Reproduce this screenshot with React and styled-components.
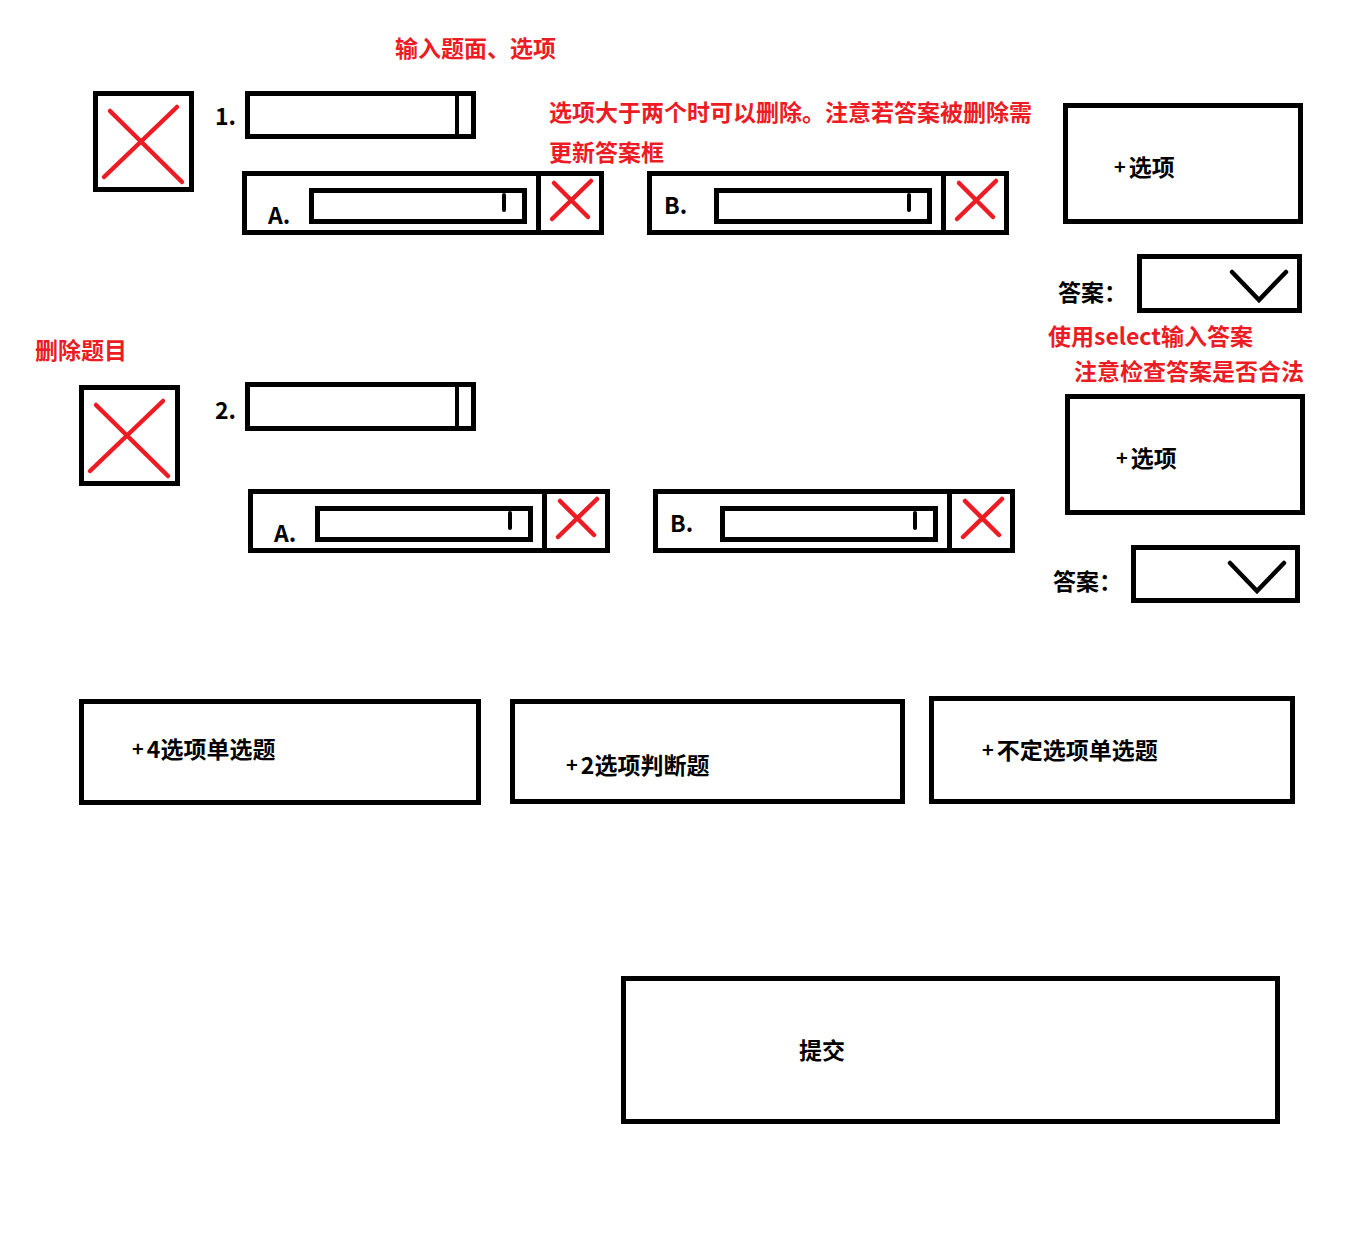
import React from "react";
import styled, { createGlobalStyle } from "styled-components";

const RED = "#ed1c24";

const GlobalStyle = createGlobalStyle`
	html, body {
		margin: 0;
		padding: 0;
		background: #fff;
	}
	body {
		font-family: "Noto Sans CJK SC", "Microsoft YaHei", sans-serif;
		font-weight: 700;
		color: #000;
	}
	* {
		box-sizing: border-box;
	}
`;

const Page = styled.div`
	width: 1371px;
	min-height: 1251px;
	display: flex;
	flex-direction: column;
	align-items: flex-start;
`;

const Note = styled.div`
	color: ${RED};
	font-size: 23px;
	line-height: ${(p) => p.$lh || 36}px;
	margin-top: ${(p) => p.$mt || 0}px;
	margin-left: ${(p) => p.$ml || 0}px;
	width: ${(p) => (p.$w ? `${p.$w}px` : "auto")};
	white-space: ${(p) => (p.$w ? "normal" : "nowrap")};
`;

const Board = styled.div`
	display: flex;
	align-items: flex-start;
	width: 100%;
`;

const QuestionList = styled.div`
	width: 1048px;
	flex-shrink: 0;
	display: flex;
	flex-direction: column;
	align-items: flex-start;
`;

const SidePanel = styled.div`
	flex: 1;
	display: flex;
	flex-direction: column;
	align-items: flex-start;
`;

const QuestionBlock = styled.section`
	display: flex;
	align-items: flex-start;
	margin-top: ${(p) => p.$mt}px;
`;

const DeleteBox = styled.button`
	appearance: none;
	padding: 0;
	background: #fff;
	width: 101px;
	height: 101px;
	border: 5px solid #000;
	margin-top: ${(p) => p.$mt || 0}px;
	margin-left: ${(p) => p.$ml || 0}px;
	display: flex;
	flex-shrink: 0;
	cursor: pointer;
`;

const QuestionBody = styled.div`
	display: flex;
	flex-direction: column;
	align-items: flex-start;
	margin-left: ${(p) => p.$ml}px;
`;

const TitleRow = styled.div`
	display: flex;
	align-items: flex-start;
`;

const Num = styled.span`
	width: 30px;
	font-size: 23px;
	line-height: 48px;
	margin-top: ${(p) => p.$mt || 0}px;
`;

const TitleInput = styled.div`
	width: 231px;
	height: ${(p) => p.$h}px;
	border: 5px solid #000;
	display: flex;
	justify-content: flex-end;
	padding-right: 12px;
`;

const TitleBar = styled.span`
	width: 4px;
	background: #000;
`;

const OptionsRow = styled.div`
	display: flex;
	align-items: flex-start;
	gap: 43px;
	margin-top: ${(p) => p.$mt || 0}px;
	margin-left: ${(p) => p.$ml || 0}px;
`;

const OptionItem = styled.div`
	width: 362px;
	height: 64px;
	border: 5px solid #000;
	display: flex;
`;

const OptionMain = styled.div`
	flex: 1;
	display: flex;
	align-items: flex-start;
`;

const OptionLabel = styled.span`
	width: 62px;
	padding-left: ${(p) => p.$pl}px;
	margin-top: ${(p) => p.$mt}px;
	font-size: 23px;
	line-height: 36px;
`;

const OptionInput = styled.div`
	width: 218px;
	height: 36px;
	margin-top: 12px;
	border: 5px solid #000;
	display: flex;
	justify-content: flex-end;
	align-items: flex-start;
	padding: 0 16px 0 0;
`;

const Caret = styled.span`
	width: 4px;
	height: 19px;
	border-radius: 2px;
	background: #000;
`;

const OptionDelete = styled.button`
	appearance: none;
	padding: 0;
	background: #fff;
	width: 63px;
	border: none;
	border-left: 5px solid #000;
	display: flex;
	cursor: pointer;
`;

const Plus = styled.span`
	font-size: 20px;
	margin-right: 3px;
`;

const AddOptionButton = styled.button`
	appearance: none;
	background: #fff;
	width: 240px;
	height: 121px;
	border: 5px solid #000;
	margin-top: ${(p) => p.$mt}px;
	margin-left: ${(p) => p.$ml}px;
	padding: 40px 0 0 46px;
	display: flex;
	align-items: center;
	align-content: flex-start;
	flex-wrap: wrap;
	font-family: inherit;
	font-weight: 700;
	font-size: 23px;
	line-height: 36px;
	color: #000;
	cursor: pointer;
`;

const AnswerRow = styled.div`
	display: flex;
	align-items: flex-start;
	margin-top: ${(p) => p.$mt}px;
	margin-left: ${(p) => p.$ml}px;
`;

const AnswerLabel = styled.span`
	width: ${(p) => p.$w}px;
	margin-top: ${(p) => p.$mt}px;
	font-size: 23px;
	line-height: 36px;
`;

const SelectBox = styled.div`
	width: ${(p) => p.$w}px;
	height: ${(p) => p.$h}px;
	border: 5px solid #000;
	display: flex;
	justify-content: flex-end;
	align-items: flex-start;
	padding: 9px 8px 0 0;
`;

const ActionRow = styled.div`
	display: flex;
	align-items: flex-start;
	margin-top: ${(p) => p.$mt}px;
`;

const ActionButton = styled.button`
	appearance: none;
	background: #fff;
	width: ${(p) => p.$w}px;
	height: ${(p) => p.$h}px;
	margin-top: ${(p) => p.$mt || 0}px;
	margin-left: ${(p) => p.$ml}px;
	padding: ${(p) => p.$pt}px 0 0 ${(p) => p.$pl}px;
	border: 5px solid #000;
	display: flex;
	align-items: center;
	align-content: flex-start;
	flex-wrap: wrap;
	font-family: inherit;
	font-weight: 700;
	font-size: 23px;
	line-height: 36px;
	color: #000;
	white-space: nowrap;
	cursor: pointer;
`;

const BigCross = () => (
	<svg width="91" height="91" viewBox="1 1 91 91">
		<g stroke={RED} strokeWidth="4.5" strokeLinecap="round">
			<line x1="13" y1="16" x2="85" y2="87" />
			<line x1="80" y1="12" x2="7" y2="82" />
		</g>
	</svg>
);

const SmallCross = () => (
	<svg width="58" height="54" viewBox="0 1 58 54">
		<g stroke={RED} strokeWidth="4.5" strokeLinecap="round">
			<line x1="13" y1="8" x2="47" y2="42" />
			<line x1="50" y1="6" x2="11" y2="44" />
		</g>
	</svg>
);

const Chevron = () => (
	<svg width="60" height="38" viewBox="0 0 60 38">
		<path d="M3 4 L30 32 L57 4" fill="none" stroke="#000" strokeWidth="4.5" strokeLinecap="round" />
	</svg>
);

const Option = ({ label, pl, mt }) => (
	<OptionItem>
		<OptionMain>
			<OptionLabel $pl={pl} $mt={mt}>
				{label}
			</OptionLabel>
			<OptionInput>
				<Caret />
			</OptionInput>
		</OptionMain>
		<OptionDelete type="button">
			<SmallCross />
		</OptionDelete>
	</OptionItem>
);

const Options = ({ mt, ml }) => (
	<OptionsRow $mt={mt} $ml={ml}>
		<Option label="A." pl={21} mt={20} />
		<Option label="B." pl={12} mt={10} />
	</OptionsRow>
);

const App = () => {
	return (
		<Page>
			<GlobalStyle />
			<Note $mt={29} $ml={395}>
				输入题面、选项
			</Note>
			<Board>
				<QuestionList>
					<QuestionBlock $mt={26}>
						<DeleteBox type="button" $ml={93}>
							<BigCross />
						</DeleteBox>
						<QuestionBody $ml={21}>
							<TitleRow>
								<Num>1.</Num>
								<TitleInput $h={48}>
									<TitleBar />
								</TitleInput>
								<Note $ml={73} $w={490} $lh={40}>
									选项大于两个时可以删除。注意若答案被删除需更新答案框
								</Note>
							</TitleRow>
							<Options mt={0} ml={27} />
						</QuestionBody>
					</QuestionBlock>

					<Note $mt={96} $ml={35}>
						删除题目
					</Note>

					<QuestionBlock $mt={15}>
						<DeleteBox type="button" $ml={79} $mt={3}>
							<BigCross />
						</DeleteBox>
						<QuestionBody $ml={35}>
							<TitleRow>
								<Num $mt={3}>2.</Num>
								<TitleInput $h={49}>
									<TitleBar />
								</TitleInput>
							</TitleRow>
							<Options mt={56} ml={33} />
						</QuestionBody>
					</QuestionBlock>
				</QuestionList>

				<SidePanel>
					<AddOptionButton type="button" $mt={38} $ml={15}>
						<Plus>+</Plus>
						<span>选项</span>
					</AddOptionButton>
					<AnswerRow $mt={30} $ml={10}>
						<AnswerLabel $w={79} $mt={19}>
							答案：
						</AnswerLabel>
						<SelectBox $w={165} $h={59}>
							<Chevron />
						</SelectBox>
					</AnswerRow>
					<Note $lh={35} $mt={5}>
						使用select输入答案
					</Note>
					<Note $lh={35} $ml={26}>
						注意检查答案是否合法
					</Note>
					<AddOptionButton type="button" $mt={6} $ml={17}>
						<Plus>+</Plus>
						<span>选项</span>
					</AddOptionButton>
					<AnswerRow $mt={30} $ml={5}>
						<AnswerLabel $w={78} $mt={17}>
							答案：
						</AnswerLabel>
						<SelectBox $w={169} $h={58}>
							<Chevron />
						</SelectBox>
					</AnswerRow>
				</SidePanel>
			</Board>

			<ActionRow $mt={93}>
				<ActionButton type="button" $ml={79} $mt={3} $w={402} $h={106} $pl={48} $pt={26}>
					<Plus>+</Plus>
					<span>4选项单选题</span>
				</ActionButton>
				<ActionButton type="button" $ml={29} $mt={3} $w={395} $h={105} $pl={51} $pt={42}>
					<Plus>+</Plus>
					<span>2选项判断题</span>
				</ActionButton>
				<ActionButton type="button" $ml={24} $w={366} $h={108} $pl={48} $pt={30}>
					<Plus>+</Plus>
					<span>不定选项单选题</span>
				</ActionButton>
			</ActionRow>

			<ActionButton type="button" $ml={621} $mt={171} $w={659} $h={148} $pl={173} $pt={50}>
				<span>提交</span>
			</ActionButton>
		</Page>
	);
};

export default App;
